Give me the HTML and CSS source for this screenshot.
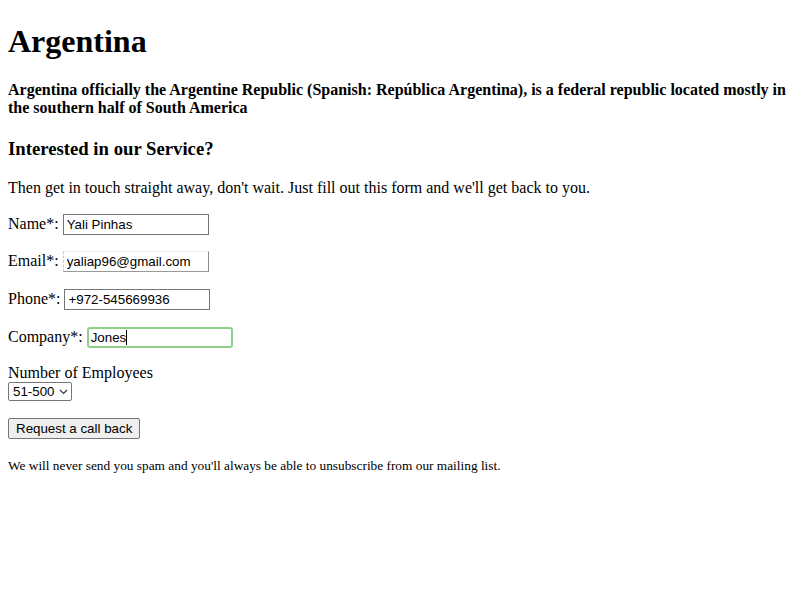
FILE: index.html
```html
<!DOCTYPE html>
<html>
<head>
<meta charset="utf-8">
<title>Argentina</title>
<link rel="stylesheet" href="styles.css">
</head>
<body>
<h1 class="title">Argentina</h1>
<h4 class="lead">Argentina officially the Argentine Republic (Spanish: República Argentina), is a federal republic located mostly in the southern half of South America</h4>
<h3 class="section">Interested in our Service?</h3>
<p class="intro">Then get in touch straight away, don't wait. Just fill out this form and we'll get back to you.</p>
<form class="form">
  <p class="field"><label>Name*: </label><input class="text" type="text" value="Yali Pinhas"></p>
  <p class="field"><label>Email*: </label><input class="text text-email" type="text" value="yaliap96@gmail.com"></p>
  <p class="field"><label>Phone*: </label><input class="text" type="text" value="+972-545669936"></p>
  <p class="field"><label>Company*: </label><span class="text text-focus">Jones<span class="caret"></span></span></p>
  <p class="field"><label>Number of Employees</label><br><span class="select">51-500<svg class="chev" width="9" height="6" viewBox="0 0 9 6"><path d="M1 1l3.5 3.5L8 1" fill="none" stroke="#333" stroke-width="1.1"/></svg></span></p>
  <p class="field"><button class="btn" type="button">Request a call back</button></p>
</form>
<p class="note">We will never send you spam and you'll always be able to unsubscribe from our mailing list.</p>
</body>
</html>
```
FILE: styles.css
```css
body {
  margin: 8px;
  font-family: "Liberation Serif", "Times New Roman", serif;
  font-size: 16px;
  color: #000;
  background: #fff;
}
.title { font-size: 32px; margin: 15px 0 21px; }
.lead { font-size: 16px; margin: 21px 0; }
.section { font-size: 18.72px; margin: 19px 0; }
.intro { margin: 16px 0; }
.form { margin: 0; }
.field { margin: 16.7px 0; }
.text {
  display: inline-block;
  box-sizing: border-box;
  width: 146px;
  height: 21px;
  padding: 1px 3px;
  border: 1px solid #767676;
  font-family: "Liberation Sans", Arial, sans-serif;
  font-size: 13.33px;
  line-height: 17px;
  color: #000;
  vertical-align: baseline;
  margin: 0;
}
.text-email {
  border-color: #f0f0f0 #8a8a8a #9a9a9a #c8c8c8;
  border-left-style: dashed;
}
.text-focus {
  border: 2px solid #8fd08a;
  border-radius: 3px;
  padding: 0 2px;
  height: 21px;
  line-height: 17px;
}
.caret {
  display: inline-block;
  width: 1px;
  height: 15px;
  background: #000;
  vertical-align: -3px;
}
.select {
  display: inline-flex;
  align-items: center;
  gap: 4px;
  box-sizing: border-box;
  height: 19px;
  padding: 0 3px 0 4px;
  border: 1px solid #767676;
  border-radius: 2px;
  font-family: "Liberation Sans", Arial, sans-serif;
  font-size: 13.33px;
}
.btn {
  box-sizing: border-box;
  height: 21px;
  padding: 1px 7px;
  border: 1px solid #767676;
  border-radius: 2px;
  background: #efefef;
  font-family: "Liberation Sans", Arial, sans-serif;
  font-size: 13.33px;
  color: #000;
  margin: 0;
}
.note { font-size: 13.33px; margin: 19px 0; }
```
